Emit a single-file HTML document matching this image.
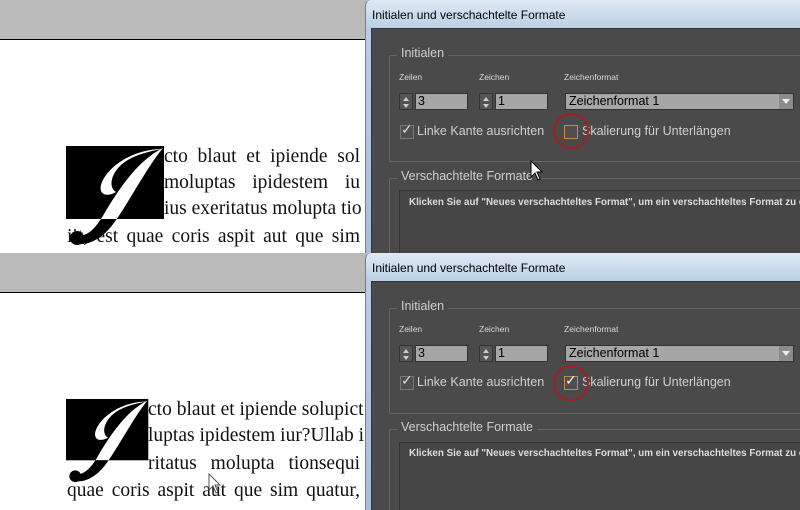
<!DOCTYPE html>
<html><head><meta charset="utf-8"><style>
*{margin:0;padding:0;box-sizing:border-box}
body{width:800px;height:510px;overflow:hidden;position:relative;background:#fff;font-family:"Liberation Sans",sans-serif}
.p{position:absolute;left:0;width:800px;height:255px;overflow:hidden}
.a{position:absolute}
.gray{left:0;top:0;width:370px;height:40px;background:#bababa;border-bottom:1px solid #000}
.doc{font-family:"Liberation Serif",serif;font-size:19.5px;color:#111;white-space:nowrap;text-align:justify;text-align-last:justify;overflow:visible}
.frame{left:365px;top:0;width:440px;height:260px;background:linear-gradient(180deg,#dfe9f4,#b9cde3 30px,#a9bfd8);border-radius:6px 0 0 0;border-left:1px solid #6f7f92}
.title{left:372px;top:8px;font-size:12px;color:#000}
.body{left:371px;top:28px;width:440px;height:240px;background:#4a4a4a;border:1px solid #333}
.grp{border:1px solid #666;border-radius:2px}
.lbl{font-size:12.5px;color:#cfcfcf;background:#4a4a4a;padding:0 4px}
.sm{font-size:8.5px;color:#d8d8d8}
.spin{width:14px;height:17px;background:#555;border:1px solid #333}
.spin:before{content:"";position:absolute;left:3px;top:3px;border:3.5px solid transparent;border-bottom:4px solid #ccc;border-top:0}
.spin:after{content:"";position:absolute;left:3px;top:10px;border:3.5px solid transparent;border-top:4px solid #ccc;border-bottom:0}
.inp{height:17px;background:#a6a6a6;border:1px solid #333;font-size:12.5px;color:#000;padding-left:2px;line-height:15px}
.cb{width:14px;height:14px;border:1px solid #777;background:#4f4f4f}
.txt{font-size:12.5px;color:#d0d0d0;white-space:nowrap}
.circ{width:36px;height:36px;border:2px solid #a51e22;border-radius:50%}
.kl{font-size:9.8px;font-weight:bold;color:#ddd;white-space:nowrap}
</style></head><body>

<svg width="0" height="0" style="position:absolute">
 <defs>
  <g id="J">
   <path d="M97,2 C82,20 64,54 50,74 C38,92 24,99 12,98 L12,90 C22,90 30,82 38,68 C52,44 72,14 97,2Z"/>
   <circle cx="11" cy="92" r="7"/>
   <path d="M96,3 C70,3 44,18 36,36 C31,48 40,52 50,46 C43,42 44,30 54,20 C64,10 80,6 96,3Z"/>
  </g>
  <clipPath id="in"><rect x="0" y="0" width="98" height="73"/></clipPath>
  <clipPath id="out"><path d="M-20,-20 H120 V120 H-20Z M0,0 V73 H98 V0Z" clip-rule="evenodd"/></clipPath>
 </defs>
</svg>

<!-- Panel 1 -->
<div class="p" style="top:0">
 <div class="a gray"></div>
 <div class="a doc" style="left:164px;top:146px;width:196px">cto blaut et ipiende sol</div>
 <div class="a doc" style="left:164px;top:172px;width:196px">moluptas ipidestem iu</div>
 <div class="a doc" style="left:164px;top:198px;width:196px">ius exeritatus molupta tio</div>
 <div class="a doc" style="left:67px;top:226px;width:293px">iit, est quae coris aspit aut que sim</div>
 <svg class="a" style="left:56px;top:136px" width="120" height="120" viewBox="-10 -10 120 120">
  <rect x="0" y="0" width="98" height="73" fill="#000"/>
  <use href="#J" fill="#fff" clip-path="url(#in)"/>
  <use href="#J" fill="#000" clip-path="url(#out)"/>
 </svg>

 <div class="a frame"></div>
 <div class="a title">Initialen und verschachtelte Formate</div>
 <div class="a body"></div>
 <div class="a grp" style="left:389px;top:55px;width:430px;height:107px"></div>
 <div class="a lbl" style="left:397px;top:46px">Initialen</div>
 <div class="a sm" style="left:399px;top:72px">Zeilen</div>
 <div class="a sm" style="left:479px;top:72px">Zeichen</div>
 <div class="a sm" style="left:564px;top:72px">Zeichenformat</div>
 <div class="a spin" style="left:399px;top:93px"></div>
 <div class="a inp" style="left:415px;top:93px;width:53px">3</div>
 <div class="a spin" style="left:479px;top:93px"></div>
 <div class="a inp" style="left:495px;top:93px;width:53px">1</div>
 <div class="a inp" style="left:565px;top:93px;width:229px;padding-left:3px">Zeichenformat 1</div>
 <div class="a" style="left:779px;top:94px;width:14px;height:15px;background:#8c8c8c"><div class="a" style="left:3px;top:5px;border:4px solid transparent;border-top:5px solid #eee;border-bottom:0"></div></div>
 <div class="a cb" style="left:400px;top:125px"></div>
 <div class="a" style="left:401px;top:121px;font-size:14px;color:#ddd">✓</div>
 <div class="a txt" style="left:417px;top:124px">Linke Kante ausrichten</div>
 <div class="a cb" style="left:564px;top:125px;border-color:#c98a45"></div>
 <div class="a txt" style="left:582px;top:124px">Skalierung für Unterlängen</div>
 <div class="a circ" style="left:553px;top:113px"></div>
 <div class="a grp" style="left:389px;top:178px;width:430px;height:90px"></div>
 <div class="a lbl" style="left:397px;top:169px">Verschachtelte Formate</div>
 <div class="a" style="left:399px;top:190px;width:420px;height:70px;background:#464646;border:1px solid #333"></div>
 <div class="a kl" style="left:409px;top:197px">Klicken Sie auf "Neues verschachteltes Format", um ein verschachteltes Format zu er</div>
 <svg class="a" style="left:530px;top:160px" width="16" height="22"><path d="M1 1 L1 17 L5 13 L8 20 L10 19 L7 12 L12 12Z" fill="#fff" stroke="#000"/></svg>
</div>

<!-- Panel 2 -->
<div class="p" style="top:253px;height:257px">
 <div class="a gray"></div>
 <div class="a doc" style="left:148px;top:146px;width:212px">cto blaut et ipiende solupict</div>
 <div class="a doc" style="left:148px;top:172px;width:212px">luptas ipidestem iur?Ullab i</div>
 <div class="a doc" style="left:148px;top:200px;width:212px">ritatus molupta tionsequi</div>
 <div class="a doc" style="left:67px;top:227px;width:293px">quae coris aspit aut que sim quatur,</div>
 <svg class="a" style="left:56px;top:136px" width="110" height="110" viewBox="-11.9 -11.9 131 131">
  <rect x="0" y="0" width="98" height="73" fill="#000"/>
  <use href="#J" fill="#fff" clip-path="url(#in)"/>
  <use href="#J" fill="#000" clip-path="url(#out)"/>
 </svg>
 <svg class="a" style="left:208px;top:220px" width="16" height="22"><path d="M1 1 L1 17 L5 13 L8 20 L10 19 L7 12 L12 12Z" fill="#fff" stroke="#555"/></svg>

 <div class="a frame"></div>
 <div class="a title" style="top:8px">Initialen und verschachtelte Formate</div>
 <div class="a body"></div>
 <div class="a grp" style="left:389px;top:55px;width:430px;height:106px"></div>
 <div class="a lbl" style="left:397px;top:46px">Initialen</div>
 <div class="a sm" style="left:399px;top:71px">Zeilen</div>
 <div class="a sm" style="left:479px;top:71px">Zeichen</div>
 <div class="a sm" style="left:564px;top:71px">Zeichenformat</div>
 <div class="a spin" style="left:399px;top:92px"></div>
 <div class="a inp" style="left:415px;top:92px;width:53px">3</div>
 <div class="a spin" style="left:479px;top:92px"></div>
 <div class="a inp" style="left:495px;top:92px;width:53px">1</div>
 <div class="a inp" style="left:565px;top:92px;width:229px;padding-left:3px">Zeichenformat 1</div>
 <div class="a" style="left:779px;top:93px;width:14px;height:15px;background:#8c8c8c"><div class="a" style="left:3px;top:5px;border:4px solid transparent;border-top:5px solid #eee;border-bottom:0"></div></div>
 <div class="a cb" style="left:400px;top:123px"></div>
 <div class="a" style="left:401px;top:119px;font-size:14px;color:#ddd">✓</div>
 <div class="a txt" style="left:417px;top:122px">Linke Kante ausrichten</div>
 <div class="a cb" style="left:564px;top:123px;border-color:#c98a45"></div>
 <div class="a" style="left:565px;top:119px;font-size:14px;color:#eee">✓</div>
 <div class="a txt" style="left:582px;top:122px">Skalierung für Unterlängen</div>
 <div class="a circ" style="left:553px;top:112px"></div>
 <div class="a grp" style="left:389px;top:176px;width:430px;height:90px"></div>
 <div class="a lbl" style="left:397px;top:167px">Verschachtelte Formate</div>
 <div class="a" style="left:399px;top:189px;width:420px;height:70px;background:#464646;border:1px solid #333"></div>
 <div class="a kl" style="left:409px;top:195px">Klicken Sie auf "Neues verschachteltes Format", um ein verschachteltes Format zu er</div>
</div>
</body></html>
